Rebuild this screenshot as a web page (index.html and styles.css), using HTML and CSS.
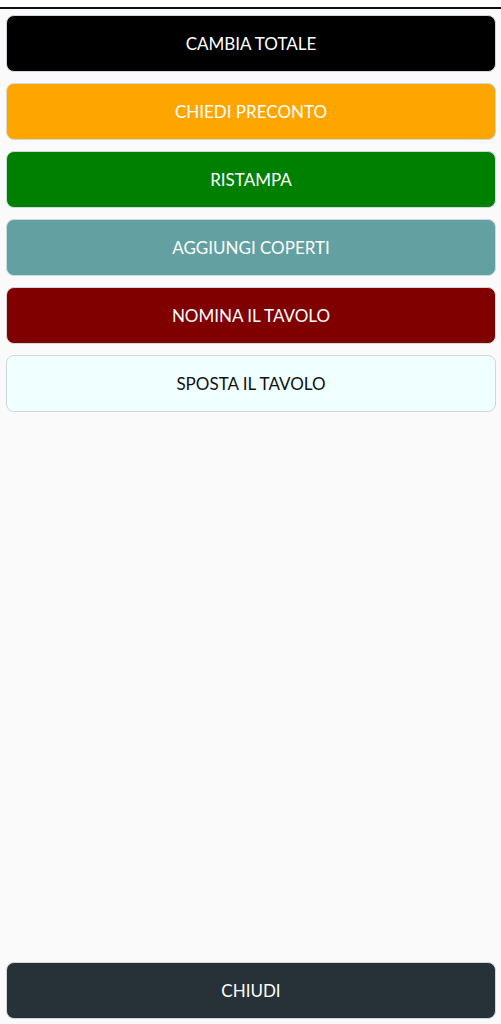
FILE: index.html
```html
<!DOCTYPE html>
<html lang="it">
	<head>
		<meta charset="UTF-8" />
		<meta name="viewport" content="width=device-width, initial-scale=1.0" />
		<title>Azioni tavolo</title>
		<link rel="stylesheet" href="styles.css">
	</head>
	<body>
		<div class="topbar"></div>
		<div class="actions">
			<button class="action black">CAMBIA TOTALE</button>
			<button class="action orange">CHIEDI PRECONTO</button>
			<button class="action green">RISTAMPA</button>
			<button class="action cadet">AGGIUNGI COPERTI</button>
			<button class="action maroon">NOMINA IL TAVOLO</button>
			<button class="action azure">SPOSTA IL TAVOLO</button>
		</div>
		<div class="footer">
			<button class="action dark">CHIUDI</button>
		</div>
	</body>
</html>
```

FILE: styles.css
```css
* {
	font-family: Lato, sans-serif;
	box-sizing: border-box;
}
html {
	background-color: #fafafa;
}
body {
	height: 100vh;
	margin: unset;
	display: flex;
	flex-direction: column;
	background-color: #fafafa;
}
.topbar {
	height: 9px;
	background-color: #ffffff;
	border-bottom: 2px solid #111111;
	flex-shrink: 0;
}
.actions {
	flex: 1;
	display: flex;
	flex-direction: column;
	gap: 11px;
	padding: 6px 5px 0 6px;
}
.footer {
	padding: 0 5px 5px 6px;
}
.action {
	width: 100%;
	height: 57px;
	border: 1px solid #cfd8dc;
	border-radius: 8px;
	font-size: 17px;
	color: #ffffff;
	cursor: pointer;
	display: block;
}
.black {
	background-color: #000000;
}
.orange {
	background-color: #ffa500;
}
.green {
	background-color: #008000;
}
.cadet {
	background-color: #62a0a2;
}
.maroon {
	background-color: #800000;
}
.azure {
	background-color: #f0ffff;
	color: #111111;
}
.dark {
	background-color: #263238;
}
```
